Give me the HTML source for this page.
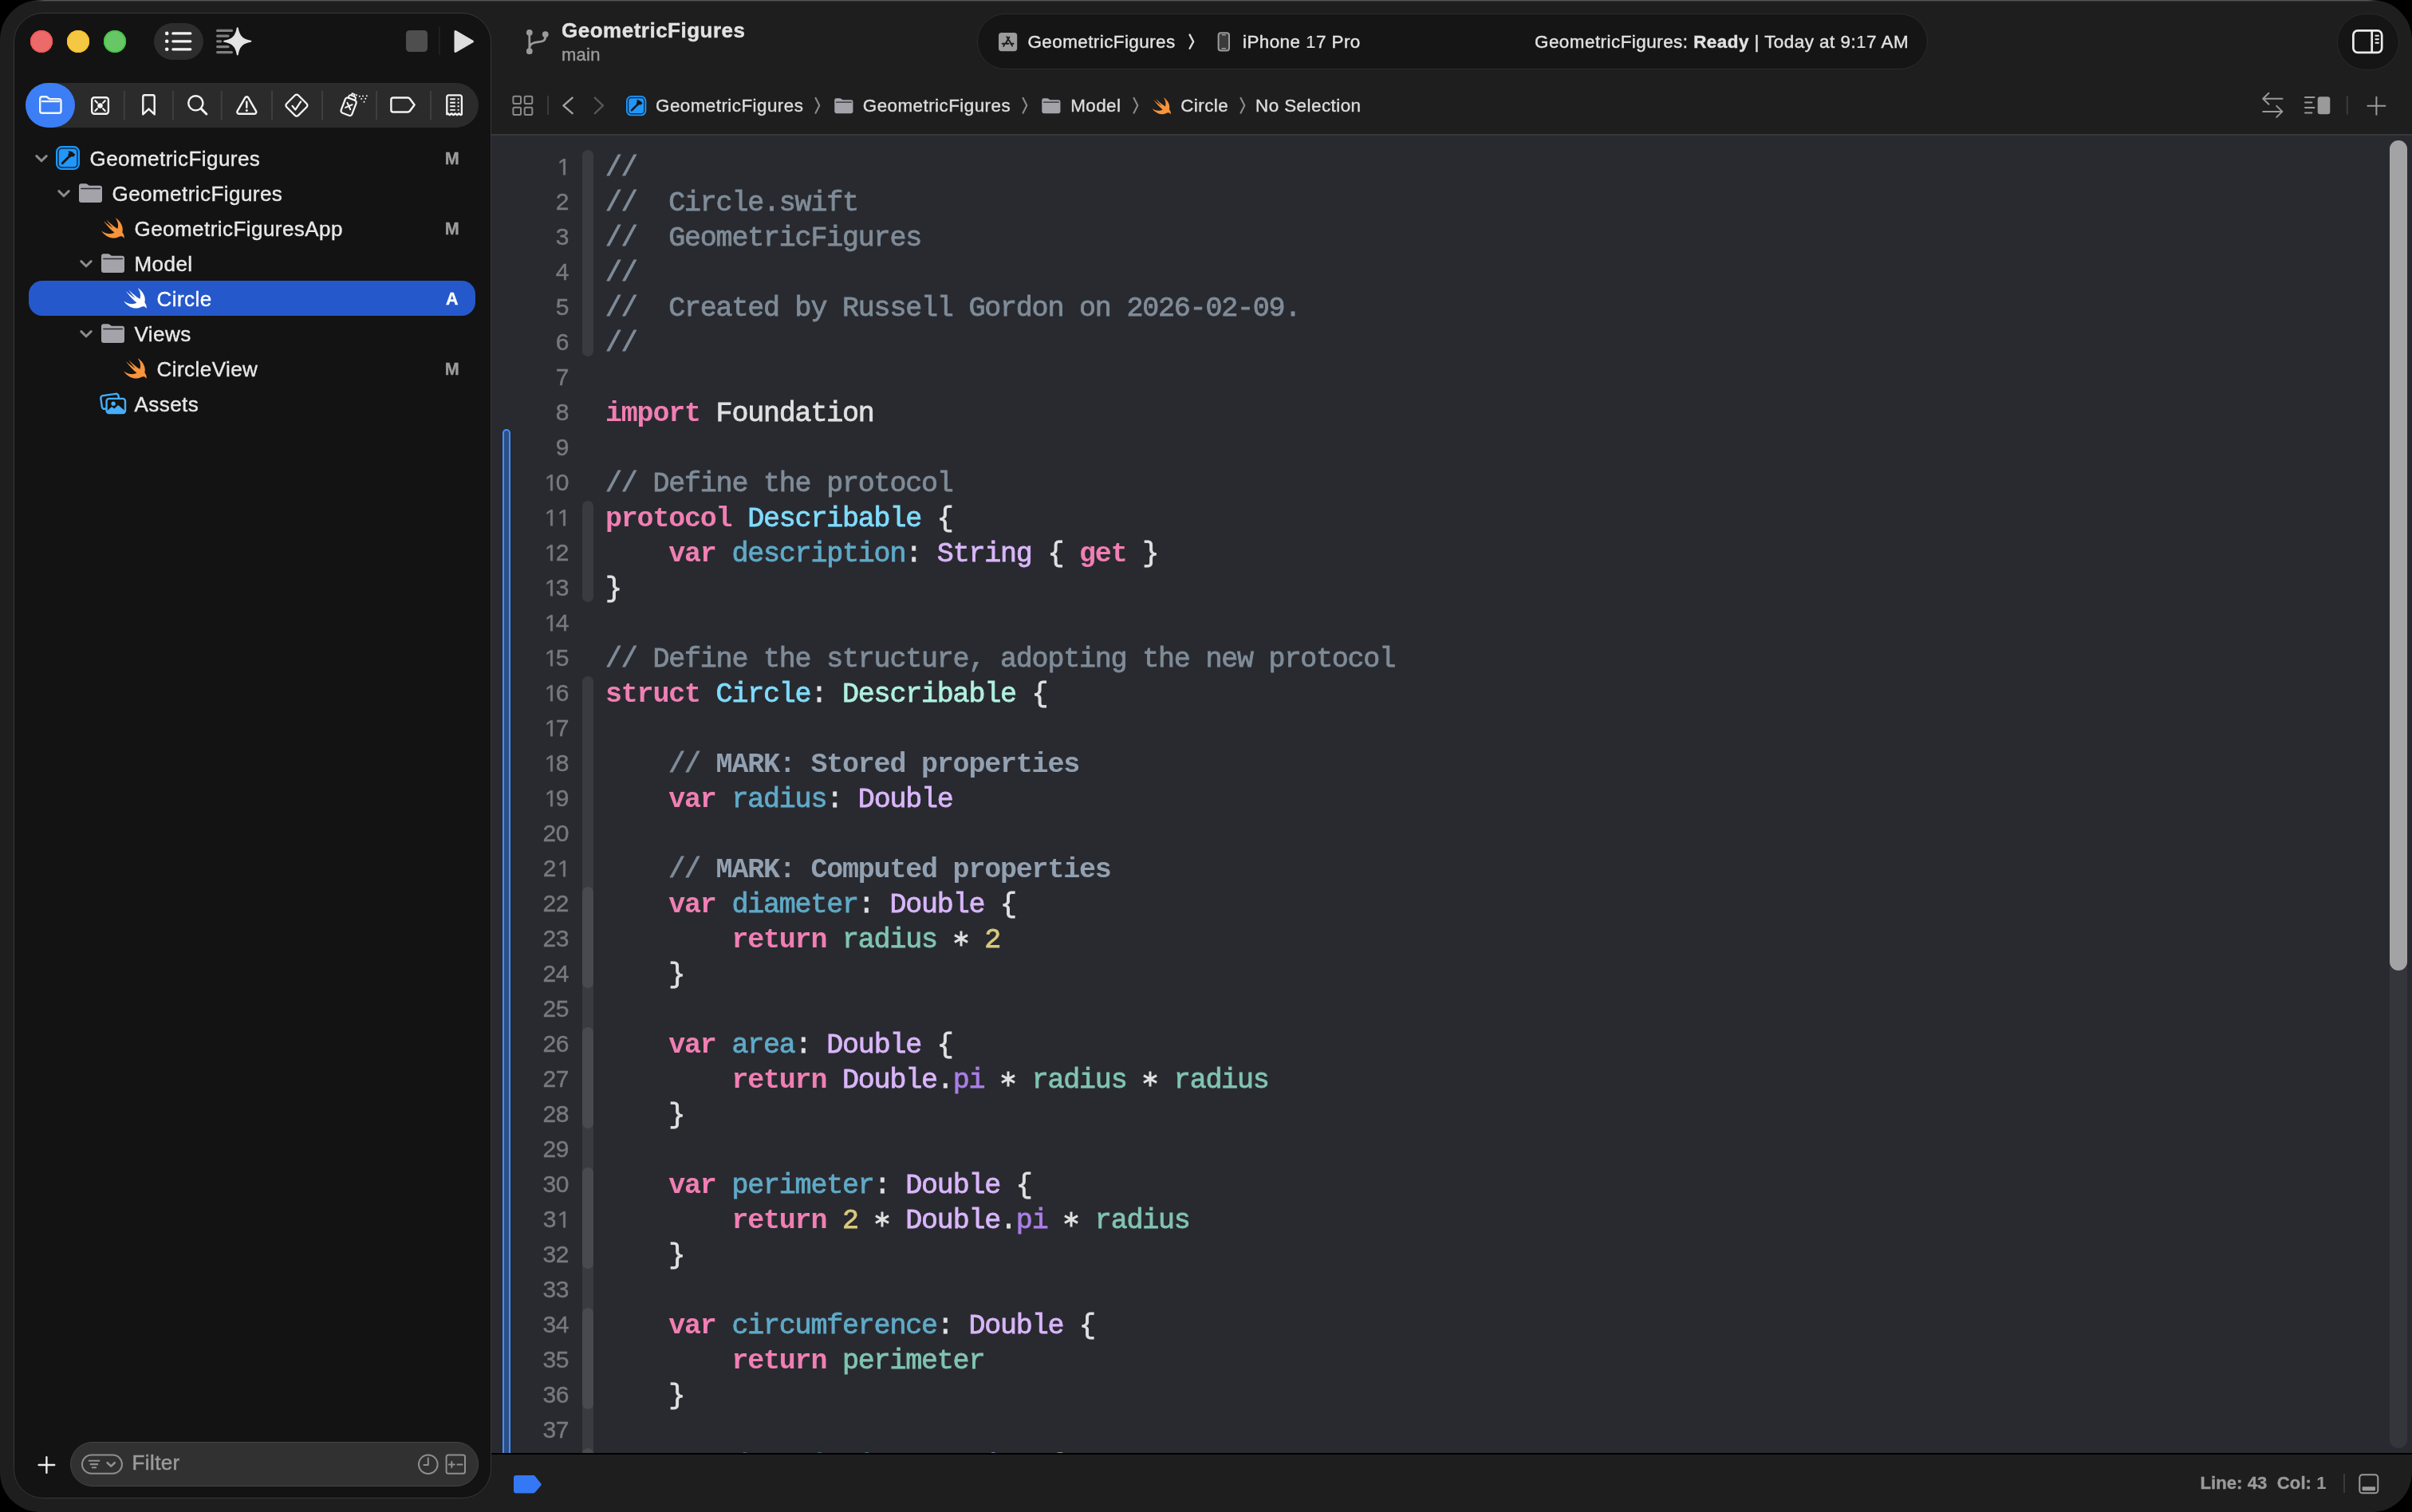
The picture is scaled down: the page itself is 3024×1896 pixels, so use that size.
<!DOCTYPE html>
<html><head><meta charset="utf-8"><title>Xcode</title>
<style>
*{box-sizing:border-box;margin:0;padding:0}
html,body{width:3024px;height:1896px;background:#000;overflow:hidden}
body{font-family:"Liberation Sans",sans-serif;color:#e0e0e0;position:relative}
.abs{position:absolute}
#win{position:absolute;left:0;top:0;width:3024px;height:1896px;border-radius:50px;background:#1e1e1e;overflow:hidden;will-change:transform}
#side{position:absolute;left:16.600px;top:16.300px;width:599.400px;height:1863px;border-radius:36.500px;background:#131313;border:1.8px solid #373737}
.tl{position:absolute;top:38px;width:28px;height:28px;border-radius:50%}
svg{position:absolute;overflow:visible}
.t{position:absolute;white-space:pre;line-height:1;-webkit-text-stroke:.4px}
i{font-style:normal;-webkit-text-stroke:0}
svg.o{position:static;display:inline-block;vertical-align:baseline;fill:#79797d;stroke:#79797d;stroke-width:27px;margin-right:-.400px}
/* sidebar tree */
.row{position:absolute;left:36px;width:560px;height:44px}
.row .lbl{position:absolute;top:8px;font-size:27px;line-height:28px;color:#e6e6e6;white-space:pre}
.row .st{position:absolute;left:519px;width:24px;text-align:center;top:10px;font-size:21px;line-height:24px;font-weight:700;color:#9b9b9b}
/* editor */
#ed{position:absolute;left:616px;top:168px;width:2408px;height:1654px;background:#292a30;overflow:hidden;box-shadow:inset 0 2px 0 #38383b}
.as{display:inline-block;position:relative;width:19.796px;height:20px;letter-spacing:0}
.as svg{left:-.1px;bottom:.45px}
.ln{position:absolute;left:0;width:97px;text-align:right;font-family:"Liberation Sans",sans-serif;font-size:30px;letter-spacing:-.4px;line-height:44px;height:44px;color:#79797d;white-space:pre;padding-top:2.200px;-webkit-text-stroke:.4px}
.cl{position:absolute;left:143px;font-family:"Liberation Mono",monospace;font-size:35px;letter-spacing:-1.204px;line-height:44px;height:44px;color:#e0e0e1;white-space:pre;padding-top:3.400px;-webkit-text-stroke:.8px}
.k{color:#f07fb3;font-weight:700;-webkit-text-stroke:0}
.c{color:#7f8c98}
.m{color:#92a1b1;font-weight:700;-webkit-text-stroke:0}
.td{color:#7fdcff}
.od{color:#5faac7}
.ts{color:#d9b6fa}
.tp{color:#b0f0df}
.pp{color:#80c4b2}
.n{color:#d9c97c}
.ps{color:#aa7ee6}
.rib{position:absolute;left:114px;width:14px;border-radius:7px;background:#3a3b40}
.rib2{background:#494a4f}
</style></head><body>
<div id="win">
<!--SIDEBAR-->
<div class="abs" style="left:46px;top:0;width:2932px;height:1px;background:linear-gradient(90deg,transparent,#555 10px,#555 2922px,transparent)"></div>
<div class="abs" style="left:40px;top:1px;width:2944px;height:1px;background:linear-gradient(90deg,transparent,#343434 12px,#343434 2932px,transparent)"></div>
<div id="side"></div>
<!--TOOLBAR-->
<div class="tl" style="left:38px;background:#ed6a6a;box-shadow:inset 0 0 0 1.5px #f85552"></div>
<div class="tl" style="left:84px;background:#f4c843;box-shadow:inset 0 0 0 1.5px #f9c126"></div>
<div class="tl" style="left:130px;background:#67c766;box-shadow:inset 0 0 0 1.5px #3fc742"></div>
<div class="abs" style="left:193px;top:29px;width:62px;height:46px;border-radius:23px;background:#2d2d2d"></div>
<svg style="left:193px;top:29px" width="62" height="46" viewBox="0 0 62 46"><g stroke="#f2f2f2" stroke-width="3.2" stroke-linecap="round"><path d="M23.800 12.900H45.800M23.800 22.800H45.800M23.800 32.800H45.800"/></g><g fill="#f2f2f2"><circle cx="16.200" cy="12.900" r="2.300"/><circle cx="16.200" cy="22.800" r="2.300"/><circle cx="16.200" cy="32.800" r="2.300"/></g></svg>
<svg style="left:268px;top:30px" width="52" height="44" viewBox="0 0 52 44"><g stroke="#7f7f7f" stroke-width="3.200" stroke-linecap="round"><path d="M4.600 8.400H22.500M4.600 15.100H18M4.600 21.800H8.600M4.600 28.600H18M4.600 35.600H22.500"/></g><path fill="#e3e3e3" stroke="#e3e3e3" stroke-width="2" stroke-linejoin="round" transform="translate(29.75 21.85)" d="M0-16.600C1.500-6.400 6.400-1.500 16.600 0C6.400 1.500 1.500 6.400 0 16.600C-1.500 6.400-6.400 1.500-16.600 0C-6.400-1.500-1.500-6.400 0-16.600Z"/></svg>
<div class="abs" style="left:509px;top:38px;width:27px;height:27px;border-radius:4.5px;background:#4e4e4e"></div>
<div class="abs" style="left:550px;top:34px;width:2px;height:35px;background:#202020"></div>
<svg style="left:566px;top:34px" width="32" height="36" viewBox="0 0 32 36"><path fill="#dedede" stroke="#dedede" stroke-width="3" stroke-linejoin="round" d="M5 5.5L26.5 18L5 30.5Z"/></svg>
<!--TABBAR-->
<div class="abs" style="left:32px;top:104px;width:568px;height:56px;border-radius:28px;background:#2b2b2b"></div>
<div class="abs" style="left:32px;top:104px;width:62px;height:56px;border-radius:28px;background:#3b7ef6"></div>
<svg style="left:0;top:0" width="620" height="170" viewBox="0 0 620 170" fill="none" stroke="#f4f4f4" stroke-width="2.400" stroke-linecap="round" stroke-linejoin="round">
<g stroke="#3f3f3f" stroke-width="2" stroke-linecap="butt"><path d="M155.8 114V150M216.9 114V150M277.8 114V150M341 114V150M404 114V150M472 114V150M540 114V150"/></g>
<!-- folder -->
<path d="M50.2 139.2V123.9a2.7 2.7 0 0 1 2.7-2.7h4.3c1.1 0 1.8.3 2.5 1l.9.9c.7.7 1.4 1 2.5 1H73.8a2.7 2.7 0 0 1 2.7 2.7V139.2a2.5 2.5 0 0 1-2.5 2.5H52.7a2.5 2.5 0 0 1-2.5-2.5Z"/><path d="M53 127.2H74" stroke-width="2.2"/>
<!-- scm square -->
<rect x="115.2" y="122.3" width="20.7" height="20.5" rx="3"/><circle cx="125.5" cy="132.5" r="3.3" fill="#f4f4f4" stroke="none"/><path d="M119.3 126.2l2.7 2.7M131.8 126.2l-2.7 2.7M119.3 138.9l2.7-2.7M131.8 138.9l-2.7-2.7" stroke-width="2.1"/>
<!-- bookmark -->
<path d="M179.3 121.5a2.2 2.2 0 0 1 2.2-2.2h10a2.2 2.2 0 0 1 2.2 2.2V143.4L186.5 136.6L179.3 143.4Z"/>
<!-- search -->
<circle cx="245.3" cy="129.3" r="9.1"/><path d="M252.2 136.4l6.6 6.6" stroke-width="3"/>
<!-- warning -->
<path d="M307.4 122.4a2.2 2.2 0 0 1 3.8 0L321 139.4a2.2 2.2 0 0 1-1.9 3.3H299.5a2.2 2.2 0 0 1-1.9-3.3Z"/><path d="M309.300 127.800V134.800" stroke-width="2.400"/><circle cx="309.300" cy="138.500" r="1.500" fill="#f4f4f4" stroke="none"/>
<!-- diamond check -->
<rect x="-10.400" y="-10.400" width="20.800" height="20.800" rx="3" transform="translate(371.900 132.100) rotate(45)" stroke-width="2.300"/><path d="M366.500 132.800L370.300 137.600L377.100 127.400" stroke-width="2.200"/>
<!-- spray -->
<g transform="translate(437 134) rotate(21)"><rect x="-7.300" y="-10.500" width="14.600" height="20.400" rx="3" stroke-width="2.300"/><path d="M-4.4 -10.5v-2.2a2 2 0 0 1 2-2h4.8a2 2 0 0 1 2 2v2.2" stroke-width="2"/><path d="M-1.8 -15v-2.3h3.6v2.3" stroke-width="1.8"/><path d="M-3.300-4.200l6.600 6.400M3.300-4.200l-6.600 6.400" stroke-width="2"/></g>
<g fill="#f4f4f4" stroke="none"><circle cx="447" cy="119.2" r="1"/><circle cx="450.8" cy="120.8" r="1"/><circle cx="455" cy="120.5" r="1"/><circle cx="459.8" cy="120.2" r="1"/><circle cx="453.2" cy="124.1" r="1"/><circle cx="458.2" cy="123.7" r="1"/><circle cx="456.5" cy="127.7" r="1"/></g>
<!-- tag -->
<path d="M493 122.5H511.2c1.1 0 1.9.4 2.6 1.3L519.6 131.5L513.8 139.2c-.7.9-1.5 1.3-2.6 1.3H493a2.6 2.6 0 0 1-2.6-2.6V125.1a2.6 2.6 0 0 1 2.6-2.6Z"/>
<!-- receipt -->
<path d="M560.300 143.300V121.700a2.400 2.400 0 0 1 2.400-2.400h13.800a2.400 2.400 0 0 1 2.400 2.400V143.300q-1.200 1.600-2.330 0q-1.160-1.600-2.320 0q-1.160 1.600-2.320 0q-1.160-1.600-2.320 0q-1.160 1.600-2.320 0q-1.160-1.600-2.320 0q-1.160 1.600-2.320 0q-1.160-1.600-2.350 0Z" stroke-width="2.300"/><path d="M564.2 124.2h6.6M573.6 124.2h2M564.2 128.8h6.6M573.6 128.8h2M564.2 133.3h6.6M573.6 133.3h2M564.2 137.9h6.6M573.6 137.9h2" stroke-width="1.9" stroke-linecap="butt"/>
</svg>
<!--TREE-->
<svg width="0" height="0" style="left:0;top:0"><defs>
<symbol id="one" viewBox="-130 -1409 1139 1409" overflow="visible"><path d="M515 0V-1237L197-1010V-1180L530-1409H696V0Z"/></symbol>
<symbol id="chev" viewBox="0 0 20 14" overflow="visible"><path d="M3.8 3.6L10 9.8L16.2 3.6" fill="none" stroke="#8c8c8c" stroke-width="3" stroke-linecap="round" stroke-linejoin="round"/></symbol>
<symbol id="fold" viewBox="0 0 30 24" overflow="visible"><path d="M0 3.2A3 3 0 0 1 3 .2h5.2c1 0 1.7.3 2.4.9l.8.7c.7.6 1.4.9 2.4.9H26a3 3 0 0 1 3 3V21a3 3 0 0 1-3 3H3a3 3 0 0 1-3-3Z" fill="#a4a3aa"/><path d="M2.8 6.5H26.4" stroke="#2a2a2e" stroke-width="1.5" stroke-linecap="round"/></symbol>
<symbol id="swift" viewBox="2.3 3.3 18.7 16.5" overflow="visible"><path d="M13.543 3.41c4.114 2.47 6.545 7.162 5.549 11.131-.024.093-.05.181-.076.272l.002.001c2.062 2.538 1.5 5.258 1.236 4.745-1.072-2.086-3.066-1.568-4.088-1.043a6.803 6.803 0 0 1-.281.158l-.02.012-.002.002c-2.115 1.123-4.957 1.205-7.812-.022a12.568 12.568 0 0 1-5.64-4.838c.649.48 1.35.902 2.097 1.252 3.019 1.414 6.051 1.311 8.197-.002C9.651 12.73 7.101 9.67 5.146 7.191a10.628 10.628 0 0 1-1.005-1.384c2.34 2.142 6.038 4.83 7.365 5.576C8.69 8.408 6.208 4.743 6.324 4.86c4.436 4.47 8.528 6.996 8.528 6.996.154.085.27.154.36.213.085-.215.16-.437.224-.668.708-2.588-.09-5.548-1.893-7.992z"/></symbol>
<symbol id="proj" viewBox="0 0 30 30" overflow="visible"><rect x="1.1" y="1.1" width="27.8" height="27.8" rx="6.5" fill="#0e2d4a" stroke="#1c97f9" stroke-width="2.2"/><rect x="3.8" y="3.8" width="22.4" height="22.4" rx="4" fill="#2196fb"/><path d="M8.2 21.8L18.3 11.7" stroke="#161616" stroke-width="2.9" stroke-linecap="round"/><path d="M15.200 6.800c2.600-.800 4.900 0 6.500 1.600l2.700 2.700-2.900 2.900-1.300-1.300-1.700 1.700-3.600-3.600 1.800-1.800c-.500-.800-1-1.500-1.500-2.200Z" fill="#161616"/></symbol>
</defs></svg>
<svg style="left:42px;top:192px" width="20" height="14"><use href="#chev"/></svg>
<svg style="left:70px;top:183px" width="30" height="30"><use href="#proj"/></svg>
<div class="t" style="left:112.5px;top:184.6px;font-size:26px;letter-spacing:.45px;line-height:28px;color:#e8e8e8">GeometricFigures</div>
<div class="t" style="left:546.800px;width:40px;text-align:center;top:186.8px;font-size:21.5px;line-height:24px;font-weight:700;color:#9b9b9b">M</div>
<svg style="left:70px;top:236px" width="20" height="14"><use href="#chev"/></svg>
<svg style="left:99px;top:230px" width="30" height="24"><use href="#fold"/></svg>
<div class="t" style="left:140.5px;top:228.6px;font-size:26px;letter-spacing:.45px;line-height:28px;color:#e8e8e8">GeometricFigures</div>
<svg style="left:126.8px;top:273px" width="29.5" height="26" fill="#f7943c"><use href="#swift"/></svg>
<div class="t" style="left:168.5px;top:272.6px;font-size:26px;letter-spacing:.45px;line-height:28px;color:#e8e8e8">GeometricFiguresApp</div>
<div class="t" style="left:546.800px;width:40px;text-align:center;top:274.8px;font-size:21.5px;line-height:24px;font-weight:700;color:#9b9b9b">M</div>
<svg style="left:98px;top:324px" width="20" height="14"><use href="#chev"/></svg>
<svg style="left:127px;top:318px" width="30" height="24"><use href="#fold"/></svg>
<div class="t" style="left:168.5px;top:316.6px;font-size:26px;letter-spacing:.45px;line-height:28px;color:#e8e8e8">Model</div>
<div class="abs" style="left:36px;top:352px;width:560px;height:44px;border-radius:17px;background:#2558cb"></div>
<svg style="left:154.8px;top:361px" width="29.5" height="26" fill="#ffffff"><use href="#swift"/></svg>
<div class="t" style="left:196.5px;top:360.6px;font-size:26px;letter-spacing:.45px;line-height:28px;color:#ffffff">Circle</div>
<div class="t" style="left:546.800px;width:40px;text-align:center;top:362.8px;font-size:21.5px;line-height:24px;font-weight:700;color:#ffffff">A</div>
<svg style="left:98px;top:412px" width="20" height="14"><use href="#chev"/></svg>
<svg style="left:127px;top:406px" width="30" height="24"><use href="#fold"/></svg>
<div class="t" style="left:168.5px;top:404.6px;font-size:26px;letter-spacing:.45px;line-height:28px;color:#e8e8e8">Views</div>
<svg style="left:154.8px;top:449px" width="29.5" height="26" fill="#f7943c"><use href="#swift"/></svg>
<div class="t" style="left:196.5px;top:448.6px;font-size:26px;letter-spacing:.45px;line-height:28px;color:#e8e8e8">CircleView</div>
<div class="t" style="left:546.800px;width:40px;text-align:center;top:450.8px;font-size:21.5px;line-height:24px;font-weight:700;color:#9b9b9b">M</div>
<svg style="left:125px;top:491px" width="34" height="30" viewBox="0 0 34 30" fill="none" stroke="#45aefa" stroke-width="2.4" stroke-linejoin="round"><rect x="-11.2" y="-8.4" width="22.4" height="16.8" rx="3" transform="translate(13.2 12.3) rotate(-8)"/><rect x="8.6" y="8.9" width="23.4" height="18.2" rx="3" fill="#131313"/><path d="M9 24.5l6.2-5.6 3 2.6 5-4.6 8.5 7.4v1a2 2 0 0 1-2 2H11a2 2 0 0 1-2-2Z" fill="#45aefa" stroke="none"/><circle cx="17.1" cy="15.2" r="2.6" fill="#45aefa" stroke="none"/></svg>
<div class="t" style="left:168.5px;top:492.6px;font-size:26px;letter-spacing:.45px;line-height:28px;color:#e8e8e8">Assets</div>
<!--FILTER-->
<svg style="left:46px;top:1825px" width="24" height="24" viewBox="0 0 24 24"><path d="M12.4 2.2V21.8M2.6 12H22.2" stroke="#ececec" stroke-width="2.4" stroke-linecap="round"/></svg>
<div class="abs" style="left:88px;top:1808px;width:512px;height:56px;border-radius:28px;background:#313131;border:1.5px solid #454545"></div>
<svg style="left:100px;top:1820px" width="500" height="32" viewBox="100 1820 500 32" fill="none" stroke="#8f8f8f" stroke-width="2" stroke-linecap="round" stroke-linejoin="round">
<rect x="103" y="1824.6" width="50" height="23.2" rx="11.6"/>
<path d="M110.800 1831.800H125.200M112.800 1836.100H123M115 1840.300H121" stroke-width="2.100" stroke-linecap="butt"/>
<path d="M134.6 1834.2L139.2 1838.6L143.8 1834.2" stroke-width="2.6"/>
<circle cx="536.8" cy="1836.2" r="11.8"/><path d="M536.8 1828.6V1837H531.4" stroke-width="2"/>
<rect x="559.6" y="1824.6" width="23.4" height="23.2" rx="2.5"/><path d="M562.8 1836.4H569.8M566.3 1832.9V1839.9M573.4 1836.4H579.6" stroke-width="2"/>
</svg>
<div class="t" style="left:165.5px;top:1820px;font-size:26px;letter-spacing:.4px;line-height:28px;color:#9b9b9b;-webkit-text-stroke:.5px">Filter</div>
<!--TITLE-->
<svg style="left:655px;top:32px" width="38" height="40" viewBox="655 32 38 40" fill="none" stroke="#9b9b9b" stroke-width="2.700" stroke-linecap="round"><circle cx="663.800" cy="40.800" r="2.550" fill="#9b9b9b"/><circle cx="663.800" cy="64.200" r="2.550" fill="#9b9b9b"/><circle cx="683.800" cy="43.100" r="2.550" fill="#9b9b9b"/><path d="M663.800 40.800V64.200M683.800 43.100V46C683.800 51.300 680.200 52 675 52.700C669.500 53.400 664.600 54.200 663.900 59.500"/></svg>
<div class="t" style="left:704px;top:23.400px;font-size:26px;letter-spacing:.5px;font-weight:700;line-height:30px;color:#e2e2e2">GeometricFigures</div>
<div class="t" style="left:704px;top:56.800px;font-size:22px;letter-spacing:.25px;line-height:24px;color:#9b9b9b">main</div>
<div class="abs" style="left:1225px;top:17px;width:1192px;height:70px;border-radius:35px;background:#151515;border:1.5px solid #2b2b2b"></div>
<svg style="left:1252px;top:40.800px" width="23.200" height="23.200" viewBox="0 0 23.200 23.200"><rect x="0" y="0" width="23.200" height="23.200" rx="3.600" fill="#9b9b9b"/><g stroke="#1a1a1a" stroke-width="1.900" stroke-linecap="round" fill="none"><path d="M13.400 5.600L9.100 13.100M7 15.500L6.200 16.900M10.400 5.200L11.300 6.800M13.100 9.600L17.100 16.600M4.600 13.800H12.500M15.700 13.800H18.600"/></g></svg>
<div class="t" style="left:1288.5px;top:38.500px;font-size:22.4px;letter-spacing:.45px;line-height:28px;color:#e2e2e2">GeometricFigures</div>
<svg style="left:1486px;top:40px" width="14" height="26" viewBox="0 0 14 26"><path d="M5.600 3.600L10.200 12.200L5.600 20.800" fill="none" stroke="#dcdcdc" stroke-width="2.400" stroke-linecap="round" stroke-linejoin="round"/></svg>
<svg style="left:1526px;top:40px" width="17" height="25" viewBox="0 0 17 25"><rect x="1.6" y="1.200" width="13.4" height="22.400" rx="3" fill="#3a3a3a" stroke="#9a9a9a" stroke-width="2"/><path d="M6.300 3.700H10.300M6 20.800H10.600" stroke="#9a9a9a" stroke-width="1.400" stroke-linecap="round"/></svg>
<div class="t" style="left:1558px;top:38.500px;font-size:22.4px;letter-spacing:.45px;line-height:28px;color:#e2e2e2">iPhone <i>1</i>7 Pro</div>
<div class="t" style="left:1924px;top:38.500px;font-size:22.4px;letter-spacing:.49px;line-height:28px;color:#e2e2e2">GeometricFigures: <b>Ready</b> | Today at 9:<i>1</i>7 AM</div>
<div class="abs" style="left:2929.500px;top:16.500px;width:78.500px;height:71px;border-radius:35.500px;background:#151515;border:1.5px solid #2a2a2a"></div>
<svg style="left:2948px;top:36px" width="41" height="32" viewBox="2948 36 41 32" fill="none" stroke="#ebebeb" stroke-linecap="round"><rect x="2950.400" y="38.400" width="35.800" height="27.400" rx="5.500" stroke-width="2.700"/><path d="M2973.700 38.500V65.600" stroke-width="2.700"/><path d="M2978.400 44.800H2982M2978.400 49.300H2982M2978.400 53.800H2982" stroke-width="1.900"/></svg>
<!--JUMPBAR-->
<svg style="left:641px;top:118px" width="30" height="30" viewBox="640 118 30 30" fill="none" stroke="#8a8a8a" stroke-width="2"><rect x="642.400" y="120.700" width="9.600" height="9.300" rx="1.800"/><rect x="656.700" y="120.700" width="9.600" height="9.300" rx="1.800"/><rect x="642.400" y="134.700" width="9.600" height="9.300" rx="1.800"/><rect x="656.700" y="134.700" width="9.600" height="9.300" rx="1.800"/></svg>
<div class="abs" style="left:686px;top:120px;width:2px;height:24px;background:#3a3a3a"></div>
<svg style="left:700px;top:118px" width="64" height="30" viewBox="700 118 64 30" fill="none" stroke-width="2.400" stroke-linecap="round" stroke-linejoin="round"><path d="M717.600 122.600L706.400 132.400L717.600 142.200" stroke="#a2a2a2"/><path d="M745.800 122.600L756 132.400L745.800 142.200" stroke="#565656"/></svg>
<svg style="left:785.400px;top:119.700px" width="25.300" height="25.300"><use href="#proj"/></svg>
<div class="t" style="left:822px;top:118.500px;font-size:22.4px;letter-spacing:.46px;line-height:28px;color:#dcdcdc">GeometricFigures</div>
<svg style="left:1019.3px;top:120px" width="12" height="24" viewBox="0 0 12 24"><path d="M3.500 2.800L8.300 12.300L3.500 21.800" fill="none" stroke="#8e8e8e" stroke-width="2" stroke-linecap="round" stroke-linejoin="round"/></svg>
<svg style="left:1046px;top:122.800px" width="24.500" height="19.200"><use href="#fold"/></svg>
<div class="t" style="left:1081.8px;top:118.500px;font-size:22.4px;letter-spacing:.46px;line-height:28px;color:#dcdcdc">GeometricFigures</div>
<svg style="left:1279px;top:120px" width="12" height="24" viewBox="0 0 12 24"><path d="M3.500 2.800L8.300 12.300L3.500 21.800" fill="none" stroke="#8e8e8e" stroke-width="2" stroke-linecap="round" stroke-linejoin="round"/></svg>
<svg style="left:1306px;top:122.800px" width="24.500" height="19.200"><use href="#fold"/></svg>
<div class="t" style="left:1342.2px;top:118.500px;font-size:22.4px;letter-spacing:.46px;line-height:28px;color:#dcdcdc">Model</div>
<svg style="left:1418px;top:120px" width="12" height="24" viewBox="0 0 12 24"><path d="M3.500 2.800L8.300 12.300L3.500 21.800" fill="none" stroke="#8e8e8e" stroke-width="2" stroke-linecap="round" stroke-linejoin="round"/></svg>
<svg style="left:1444px;top:121.500px" width="24.500" height="21.600" fill="#f7943c"><use href="#swift"/></svg>
<div class="t" style="left:1480.2px;top:118.500px;font-size:22.4px;letter-spacing:.46px;line-height:28px;color:#dcdcdc">Circle</div>
<svg style="left:1552px;top:120px" width="12" height="24" viewBox="0 0 12 24"><path d="M3.500 2.800L8.300 12.300L3.500 21.800" fill="none" stroke="#8e8e8e" stroke-width="2" stroke-linecap="round" stroke-linejoin="round"/></svg>
<div class="t" style="left:1574px;top:118.500px;font-size:22.4px;letter-spacing:.46px;line-height:28px;color:#dcdcdc">No Selection</div>
<svg style="left:2830px;top:112px" width="170" height="40" viewBox="2830 112 170 40" fill="none" stroke="#9a9a9a" stroke-width="2" stroke-linecap="round" stroke-linejoin="round">
<path d="M2861.400 123.800H2837.200M2844.400 116.800L2837.200 123.800L2844.400 130.800M2837.200 139.900H2861.400M2854.200 132.900L2861.400 139.900L2854.200 146.900"/>
<path d="M2890 121.900H2901.500M2890 128.500H2898.400M2890 135H2901.500M2890 141.600H2898.400"/>
<rect x="2905.700" y="121.200" width="15.600" height="22.100" rx="3.200" fill="#9a9a9a" stroke="none"/>
<path d="M2942.800 120.500V143.500" stroke="#3c3c3c" stroke-linecap="butt"/>
<path d="M2979.400 121.700V143.700M2968.400 132.700H2990.400"/>
</svg>
<!--EDITOR-->
<div id="ed">
<div class="rib " style="top:20.3px;height:259.0px"></div>
<div class="rib " style="top:460.3px;height:127.0px"></div>
<div class="rib " style="top:680.3px;height:1975.0px"></div>
<div class="rib rib2" style="top:944.3px;height:127.0px"></div>
<div class="rib rib2" style="top:1120.3px;height:127.0px"></div>
<div class="rib rib2" style="top:1296.3px;height:127.0px"></div>
<div class="rib rib2" style="top:1472.3px;height:127.0px"></div>
<div class="rib rib2" style="top:1648.3px;height:127.0px"></div>
<div class="abs" style="left:14px;top:370px;width:10.200px;height:1400px;border-radius:5.100px 5.100px 0 0;background:#2d4f87;border:2.200px solid #4390fb"></div>
<div class="ln" style="top:17.3px"><svg class="o" width="16.280" height="20.640"><use href="#one"/></svg></div><div class="cl" style="top:17.3px"><span class="c">//</span></div>
<div class="ln" style="top:61.3px">2</div><div class="cl" style="top:61.3px"><span class="c">//  Circle.swift</span></div>
<div class="ln" style="top:105.3px">3</div><div class="cl" style="top:105.3px"><span class="c">//  GeometricFigures</span></div>
<div class="ln" style="top:149.3px">4</div><div class="cl" style="top:149.3px"><span class="c">//</span></div>
<div class="ln" style="top:193.3px">5</div><div class="cl" style="top:193.3px"><span class="c">//  Created by Russell Gordon on 2026-02-09.</span></div>
<div class="ln" style="top:237.3px">6</div><div class="cl" style="top:237.3px"><span class="c">//</span></div>
<div class="ln" style="top:281.3px">7</div><div class="cl" style="top:281.3px"></div>
<div class="ln" style="top:325.3px">8</div><div class="cl" style="top:325.3px"><span class="k">import</span> Foundation</div>
<div class="ln" style="top:369.3px">9</div><div class="cl" style="top:369.3px"></div>
<div class="ln" style="top:413.3px"><svg class="o" width="16.280" height="20.640"><use href="#one"/></svg>0</div><div class="cl" style="top:413.3px"><span class="c">// Define the protocol</span></div>
<div class="ln" style="top:457.3px"><svg class="o" width="16.280" height="20.640"><use href="#one"/></svg><svg class="o" width="16.280" height="20.640"><use href="#one"/></svg></div><div class="cl" style="top:457.3px"><span class="k">protocol</span> <span class="td">Describable</span> {</div>
<div class="ln" style="top:501.3px"><svg class="o" width="16.280" height="20.640"><use href="#one"/></svg>2</div><div class="cl" style="top:501.3px">    <span class="k">var</span> <span class="od">description</span>: <span class="ts">String</span> { <span class="k">get</span> }</div>
<div class="ln" style="top:545.3px"><svg class="o" width="16.280" height="20.640"><use href="#one"/></svg>3</div><div class="cl" style="top:545.3px">}</div>
<div class="ln" style="top:589.3px"><svg class="o" width="16.280" height="20.640"><use href="#one"/></svg>4</div><div class="cl" style="top:589.3px"></div>
<div class="ln" style="top:633.3px"><svg class="o" width="16.280" height="20.640"><use href="#one"/></svg>5</div><div class="cl" style="top:633.3px"><span class="c">// Define the structure, adopting the new protocol</span></div>
<div class="ln" style="top:677.3px"><svg class="o" width="16.280" height="20.640"><use href="#one"/></svg>6</div><div class="cl" style="top:677.3px"><span class="k">struct</span> <span class="td">Circle</span>: <span class="tp">Describable</span> {</div>
<div class="ln" style="top:721.3px"><svg class="o" width="16.280" height="20.640"><use href="#one"/></svg>7</div><div class="cl" style="top:721.3px"></div>
<div class="ln" style="top:765.3px"><svg class="o" width="16.280" height="20.640"><use href="#one"/></svg>8</div><div class="cl" style="top:765.3px">    <span class="c">// </span><span class="m">MARK: Stored properties</span></div>
<div class="ln" style="top:809.3px"><svg class="o" width="16.280" height="20.640"><use href="#one"/></svg>9</div><div class="cl" style="top:809.3px">    <span class="k">var</span> <span class="od">radius</span>: <span class="ts">Double</span></div>
<div class="ln" style="top:853.3px">20</div><div class="cl" style="top:853.3px"></div>
<div class="ln" style="top:897.3px">2<svg class="o" width="16.280" height="20.640"><use href="#one"/></svg></div><div class="cl" style="top:897.3px">    <span class="c">// </span><span class="m">MARK: Computed properties</span></div>
<div class="ln" style="top:941.3px">22</div><div class="cl" style="top:941.3px">    <span class="k">var</span> <span class="od">diameter</span>: <span class="ts">Double</span> {</div>
<div class="ln" style="top:985.3px">23</div><div class="cl" style="top:985.3px">        <span class="k">return</span> <span class="pp">radius</span> <span class="as"><svg width="20" height="20" viewBox="-10 -10 20 20"><path d="M0-9.600V9.600M-8.100-4.350L8.100 4.350M-8.100 4.350L8.100-4.350" stroke="#e0e0e1" stroke-width="3" fill="none"/></svg></span> <span class="n">2</span></div>
<div class="ln" style="top:1029.3px">24</div><div class="cl" style="top:1029.3px">    }</div>
<div class="ln" style="top:1073.3px">25</div><div class="cl" style="top:1073.3px"></div>
<div class="ln" style="top:1117.3px">26</div><div class="cl" style="top:1117.3px">    <span class="k">var</span> <span class="od">area</span>: <span class="ts">Double</span> {</div>
<div class="ln" style="top:1161.3px">27</div><div class="cl" style="top:1161.3px">        <span class="k">return</span> <span class="ts">Double</span>.<span class="ps">pi</span> <span class="as"><svg width="20" height="20" viewBox="-10 -10 20 20"><path d="M0-9.600V9.600M-8.100-4.350L8.100 4.350M-8.100 4.350L8.100-4.350" stroke="#e0e0e1" stroke-width="3" fill="none"/></svg></span> <span class="pp">radius</span> <span class="as"><svg width="20" height="20" viewBox="-10 -10 20 20"><path d="M0-9.600V9.600M-8.100-4.350L8.100 4.350M-8.100 4.350L8.100-4.350" stroke="#e0e0e1" stroke-width="3" fill="none"/></svg></span> <span class="pp">radius</span></div>
<div class="ln" style="top:1205.3px">28</div><div class="cl" style="top:1205.3px">    }</div>
<div class="ln" style="top:1249.3px">29</div><div class="cl" style="top:1249.3px"></div>
<div class="ln" style="top:1293.3px">30</div><div class="cl" style="top:1293.3px">    <span class="k">var</span> <span class="od">perimeter</span>: <span class="ts">Double</span> {</div>
<div class="ln" style="top:1337.3px">3<svg class="o" width="16.280" height="20.640"><use href="#one"/></svg></div><div class="cl" style="top:1337.3px">        <span class="k">return</span> <span class="n">2</span> <span class="as"><svg width="20" height="20" viewBox="-10 -10 20 20"><path d="M0-9.600V9.600M-8.100-4.350L8.100 4.350M-8.100 4.350L8.100-4.350" stroke="#e0e0e1" stroke-width="3" fill="none"/></svg></span> <span class="ts">Double</span>.<span class="ps">pi</span> <span class="as"><svg width="20" height="20" viewBox="-10 -10 20 20"><path d="M0-9.600V9.600M-8.100-4.350L8.100 4.350M-8.100 4.350L8.100-4.350" stroke="#e0e0e1" stroke-width="3" fill="none"/></svg></span> <span class="pp">radius</span></div>
<div class="ln" style="top:1381.3px">32</div><div class="cl" style="top:1381.3px">    }</div>
<div class="ln" style="top:1425.3px">33</div><div class="cl" style="top:1425.3px"></div>
<div class="ln" style="top:1469.3px">34</div><div class="cl" style="top:1469.3px">    <span class="k">var</span> <span class="od">circumference</span>: <span class="ts">Double</span> {</div>
<div class="ln" style="top:1513.3px">35</div><div class="cl" style="top:1513.3px">        <span class="k">return</span> <span class="pp">perimeter</span></div>
<div class="ln" style="top:1557.3px">36</div><div class="cl" style="top:1557.3px">    }</div>
<div class="ln" style="top:1601.3px">37</div><div class="cl" style="top:1601.3px"></div>
<div class="ln" style="top:1645.3px">38</div><div class="cl" style="top:1645.3px">    <span class="k">var</span> <span class="od">description</span>: <span class="ts">String</span> {</div>
<div class="abs" style="left:2380px;top:8px;width:22px;height:1640px;border-radius:11px;background:#35363b"></div>
<div class="abs" style="left:2380px;top:8px;width:22px;height:1041px;border-radius:11px;background:#a3a3a5"></div>
</div>
<!--BOTTOM-->
<div class="abs" style="left:616px;top:1822px;width:2408px;height:2.100px;background:#000"></div>
<svg style="left:643px;top:1849px" width="38" height="25" viewBox="0 0 38 25"><path d="M4.300 1H25.400c1.200 0 2.100.5 2.800 1.400L35.400 11.400c.5.700.5 1.500 0 2.200L28.200 22.100c-.7.900-1.600 1.400-2.800 1.400H4.300A3.300 3.300 0 0 1 1 20.200V4.300A3.300 3.300 0 0 1 4.300 1Z" fill="#3478f6"/></svg>
<div class="t" style="left:2758.500px;top:1846px;font-size:22px;letter-spacing:.1px;font-weight:700;line-height:28px;color:#9a9a9a">Line: 43  Col: <i>1</i></div>
<div class="abs" style="left:2938px;top:1848px;width:2px;height:24px;background:#3a3a3a"></div>
<svg style="left:2957px;top:1847.500px" width="26" height="26" viewBox="0 0 26 26"><rect x="1.300" y="1.300" width="23" height="23" rx="3.600" fill="none" stroke="#9a9a9a" stroke-width="2"/><rect x="4.600" y="16.200" width="16.400" height="5" rx="1" fill="#9a9a9a"/></svg>
</div>
</body></html>
